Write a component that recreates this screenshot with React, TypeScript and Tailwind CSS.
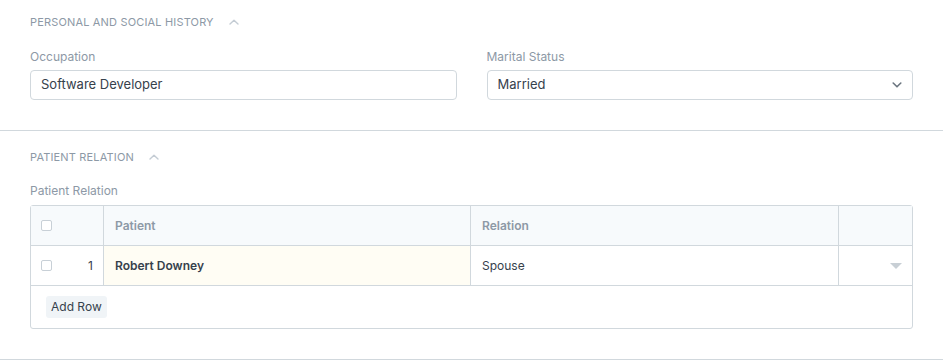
const font = { fontFamily: "Inter, 'Noto Sans', sans-serif" };

const ChevronUp = () => (
  <svg width="10" height="6" viewBox="0 0 10 6" fill="none" className="ml-[15px]">
    <path d="M1 5 L5 1.2 L9 5" stroke="#c4ccd4" strokeWidth="1.4" strokeLinecap="round" strokeLinejoin="round" />
  </svg>
);

const SectionHead = ({ title }: { title: string }) => (
  <div className="flex h-[16px] items-center">
    <span className="text-[11px] uppercase tracking-[0.015em] text-[#8d99a6]">{title}</span>
    <ChevronUp />
  </div>
);

const Checkbox = () => (
  <span className="block h-[11px] w-[11px] rounded-[2px] border border-[#c8d0d7] bg-white" />
);

const App = () => {
  return (
    <div className="w-[943px] bg-white text-[#36414c] antialiased" style={font}>
      {/* personal and social history */}
      <div className="border-b border-[#d1d8dd] px-[30px] pt-[14px] pb-[30px]">
        <SectionHead title="Personal and Social History" />
        <div className="mt-[19px] grid grid-cols-2 gap-[30px]">
          <div>
            <div className="h-[16px] text-[12px] leading-[16px] text-[#8d99a6]">Occupation</div>
            <div className="mt-[5px] flex h-[30px] items-center rounded-[4px] border border-[#d1d8dd] px-[10px] text-[13px]">
              Software Developer
            </div>
          </div>
          <div>
            <div className="h-[16px] text-[12px] leading-[16px] text-[#8d99a6]">Marital Status</div>
            <div className="mt-[5px] flex h-[30px] items-center justify-between rounded-[4px] border border-[#d1d8dd] pl-[10px] pr-[10px] text-[13px]">
              <span>Married</span>
              <svg width="10" height="6" viewBox="0 0 10 6" fill="none">
                <path d="M1.2 1 L5 4.8 L8.8 1" stroke="#6c7680" strokeWidth="1.6" strokeLinecap="round" strokeLinejoin="round" />
              </svg>
            </div>
          </div>
        </div>
      </div>

      {/* patient relation */}
      <div className="border-b border-[#d1d8dd] px-[30px] pt-[18px] pb-[30px]">
        <SectionHead title="Patient Relation" />
        <div className="mt-[18px] h-[16px] text-[12px] leading-[16px] text-[#8d99a6]">Patient Relation</div>
        <div className="mt-[6px] rounded-[3px] border border-[#d1d8dd] text-[12px]">
          <div className="grid h-[40px] grid-cols-[73px_367px_368px_1fr] border-b border-[#d1d8dd] bg-[#f7fafc] font-semibold text-[#8d99a6]">
            <div className="flex items-center border-r border-[#d1d8dd] pl-[10px]">
              <Checkbox />
            </div>
            <div className="flex items-center border-r border-[#d1d8dd] pl-[11px]">Patient</div>
            <div className="flex items-center border-r border-[#d1d8dd] pl-[11px]">Relation</div>
            <div />
          </div>
          <div className="grid h-[40px] grid-cols-[73px_367px_368px_1fr] border-b border-[#d1d8dd]">
            <div className="flex items-center justify-between border-r border-[#d1d8dd] pl-[10px] pr-[10px]">
              <Checkbox />
              <span className="text-[#36414c]">1</span>
            </div>
            <div className="flex items-center border-r border-[#d1d8dd] bg-[#fffdf4] pl-[11px] font-semibold">Robert Downey</div>
            <div className="flex items-center border-r border-[#d1d8dd] pl-[11px]">Spouse</div>
            <div className="flex items-center justify-end pr-[10px]">
              <svg width="12" height="6" viewBox="0 0 12 6">
                <path d="M0 0 L12 0 L6 6 Z" fill="#c8cfd5" />
              </svg>
            </div>
          </div>
          <div className="flex h-[42px] items-center pl-[15px]">
            <button className="h-[22px] rounded-[3px] bg-[#f0f4f7] px-[5px] text-[12px] text-[#36414c]">Add Row</button>
          </div>
        </div>
      </div>
    </div>
  );
};

export default App;
